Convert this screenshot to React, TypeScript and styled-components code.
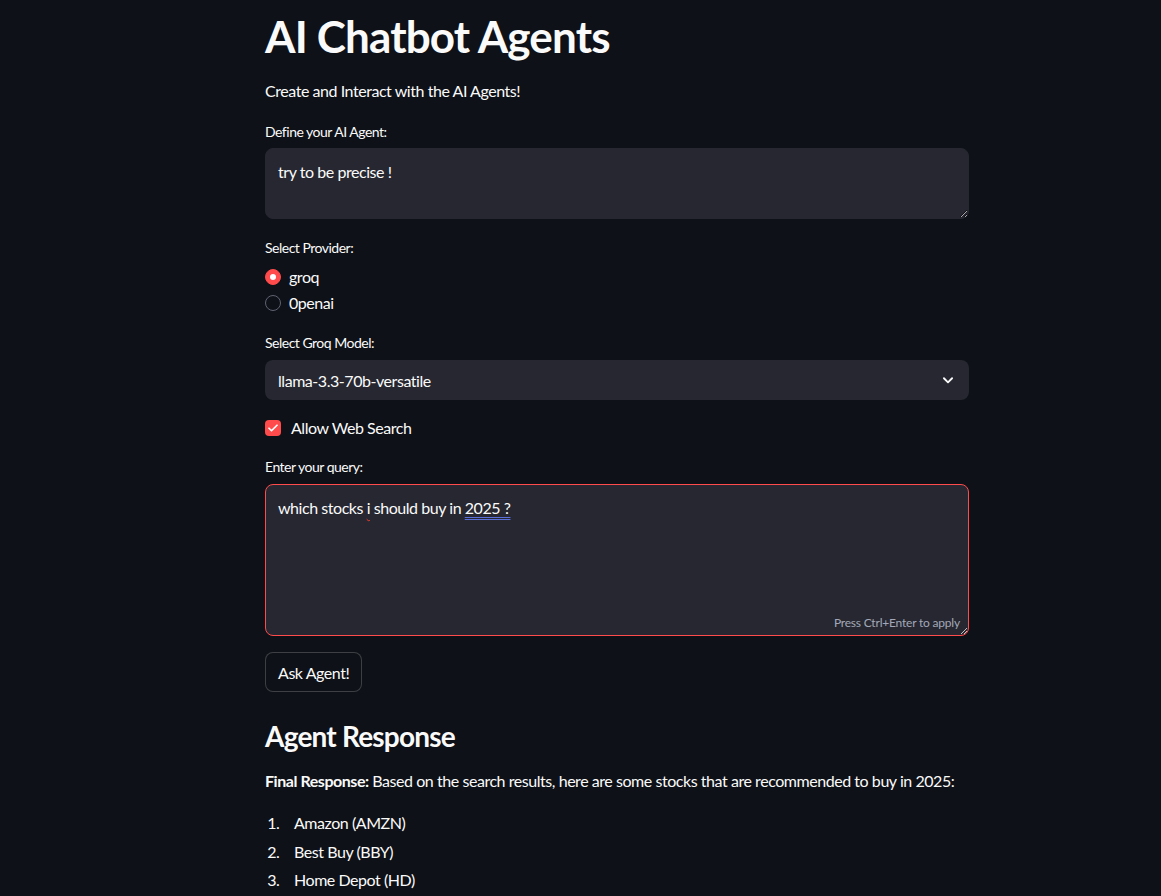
import React from "react";
import styled, { createGlobalStyle } from "styled-components";

const Global = createGlobalStyle`
  html, body { margin: 0; padding: 0; background: #0e1117; }
  body {
    font-family: "Source Sans Pro", Lato, "Noto Sans", sans-serif;
    color: #fafafa;
    letter-spacing: -0.45px;
    -webkit-font-smoothing: antialiased;
  }
  * { box-sizing: border-box; }
`;

const Page = styled.main`
  min-height: 896px;
  background: #0e1117;
  overflow: hidden;
`;

const Column = styled.div`
  width: 704px;
  margin-left: 265px;
  display: flex;
  flex-direction: column;
`;

const Title = styled.h1`
  margin: 10px 0 0;
  font-size: 44px;
  font-weight: 700;
  line-height: 52px;
  letter-spacing: -0.85px;
`;

const Text = styled.p`
  margin: 16px 0 0;
  font-size: 16px;
  line-height: 26px;
`;

const Field = styled.div<{ $top: number }>`
  display: flex;
  flex-direction: column;
  margin-top: ${(p) => p.$top}px;
`;

const Label = styled.label<{ $gap?: number }>`
  font-size: 14px;
  line-height: 20px;
  letter-spacing: -0.5px;
  margin-bottom: ${(p) => p.$gap ?? 6}px;
`;

const AreaWrap = styled.div`
  position: relative;
`;

const Area = styled.textarea<{ $h: number }>`
  display: block;
  width: 100%;
  height: ${(p) => p.$h}px;
  background: #262730;
  color: #fafafa;
  border: 1px solid #262730;
  border-radius: 8px;
  padding: 11px 12px;
  font-family: inherit;
  letter-spacing: -0.45px;
  font-size: 16px;
  line-height: 24px;
  outline: none;
  resize: vertical;
`;

const FakeArea = styled.div<{ $h: number }>`
  width: 100%;
  height: ${(p) => p.$h}px;
  background: #262730;
  border: 1px solid #ff4b4b;
  border-radius: 8px;
  padding: 11px 12px;
  font-size: 16px;
  line-height: 24px;
`;

const Wavy = styled.span`
  text-decoration: underline wavy #e83a30;
  text-decoration-thickness: 1px;
  text-underline-offset: 3px;
`;

const Grammar = styled.span`
  text-decoration: underline double #5a6fd8;
  text-decoration-thickness: 1px;
  text-underline-offset: 3px;
`;

const Hint = styled.span`
  position: absolute;
  right: 9px;
  bottom: 5px;
  font-size: 12px;
  letter-spacing: -0.2px;
  color: #a3a8b8;
  line-height: 16px;
`;

const Grip = styled.svg`
  position: absolute;
  right: 1px;
  bottom: 1px;
`;

const Radios = styled.div`
  display: flex;
  flex-direction: column;
  gap: 6px;
  margin-top: 3px;
`;

const RadioRow = styled.div`
  display: flex;
  align-items: center;
  gap: 8px;
  font-size: 16px;
  line-height: 20px;
`;

const RadioDot = styled.span<{ $on?: boolean }>`
  width: 16px;
  height: 16px;
  border-radius: 50%;
  background: ${(p) => (p.$on ? "#ff4b4b" : "transparent")};
  border: 1px solid ${(p) => (p.$on ? "#ff4b4b" : "#5f6270")};
  display: flex;
  align-items: center;
  justify-content: center;
  &::after {
    content: "";
    display: ${(p) => (p.$on ? "block" : "none")};
    width: 6px;
    height: 6px;
    border-radius: 50%;
    background: #fff;
  }
`;

const Select = styled.div`
  height: 40px;
  background: #262730;
  border-radius: 8px;
  display: flex;
  align-items: center;
  justify-content: space-between;
  padding: 0 14px 0 13px;
  font-size: 16px;
`;

const CheckRow = styled.div`
  display: flex;
  align-items: center;
  gap: 10px;
  margin-top: 18px;
  font-size: 16px;
  line-height: 20px;
`;

const CheckBox = styled.span`
  width: 16px;
  height: 16px;
  border-radius: 4px;
  background: #ff4b4b;
  display: flex;
  align-items: center;
  justify-content: center;
`;

const Button = styled.button`
  align-self: flex-start;
  margin-top: 16px;
  height: 40px;
  padding: 0 12px;
  background: #0e1117;
  color: #fafafa;
  border: 1px solid rgba(250, 250, 250, 0.2);
  border-radius: 8px;
  font-family: inherit;
  letter-spacing: -0.45px;
  font-size: 16px;
`;

const H2 = styled.h2`
  margin: 26px 0 0;
  font-size: 28px;
  font-weight: 700;
  line-height: 36px;
  letter-spacing: -0.8px;
`;

const Para = styled.p`
  margin: 15px 0 0;
  font-size: 16px;
  line-height: 24px;
`;

const List = styled.ol`
  margin: 18px 0 0;
  padding-left: 29px;
  font-size: 16px;
  line-height: 24px;
  li { margin-bottom: 4.5px; padding-left: 0; }
  li::marker { content: counter(list-item) ".    "; }
`;

export default function App() {
  return (
    <Page>
      <Global />
      <Column>
        <Title>AI Chatbot Agents</Title>
        <Text>Create and Interact with the AI Agents!</Text>

        <Field $top={18}>
          <Label>Define your AI Agent:</Label>
          <Area $h={71} readOnly defaultValue="try to be precise !" />
        </Field>

        <Field $top={19}>
          <Label>Select Provider:</Label>
          <Radios>
            <RadioRow><RadioDot $on />groq</RadioRow>
            <RadioRow><RadioDot />0penai</RadioRow>
          </Radios>
        </Field>

        <Field $top={20}>
          <Label $gap={7}>Select Groq Model:</Label>
          <Select>
            <span>llama-3.3-70b-versatile</span>
            <svg width="14" height="14" viewBox="0 0 24 24" fill="none" stroke="#fafafa" strokeWidth="3.2" strokeLinecap="round" strokeLinejoin="round">
              <path d="M5 9l7 7 7-7" />
            </svg>
          </Select>
        </Field>

        <CheckRow>
          <CheckBox>
            <svg width="12" height="12" viewBox="0 0 24 24" fill="none" stroke="#fff" strokeWidth="3.5" strokeLinecap="round" strokeLinejoin="round">
              <path d="M4 12.5l5 5L20 6.5" />
            </svg>
          </CheckBox>
          Allow Web Search
        </CheckRow>

        <Field $top={19}>
          <Label $gap={7}>Enter your query:</Label>
          <AreaWrap>
            <FakeArea $h={152}>
              which stocks <Wavy>i</Wavy> should buy in <Grammar>2025 ?</Grammar>
            </FakeArea>
            <Hint>Press Ctrl+Enter to apply</Hint>
            <Grip width="9" height="9" viewBox="0 0 9 9">
              <path d="M8 2L2 8M8 5L5 8" stroke="#c0c0c0" strokeWidth="1" />
            </Grip>
          </AreaWrap>
        </Field>

        <Button>Ask Agent!</Button>

        <H2>Agent Response</H2>
        <Para><b>Final Response:</b> Based on the search results, here are some stocks that are recommended to buy in 2025:</Para>
        <List>
          <li>Amazon (AMZN)</li>
          <li>Best Buy (BBY)</li>
          <li>Home Depot (HD)</li>
        </List>
      </Column>
    </Page>
  );
}
